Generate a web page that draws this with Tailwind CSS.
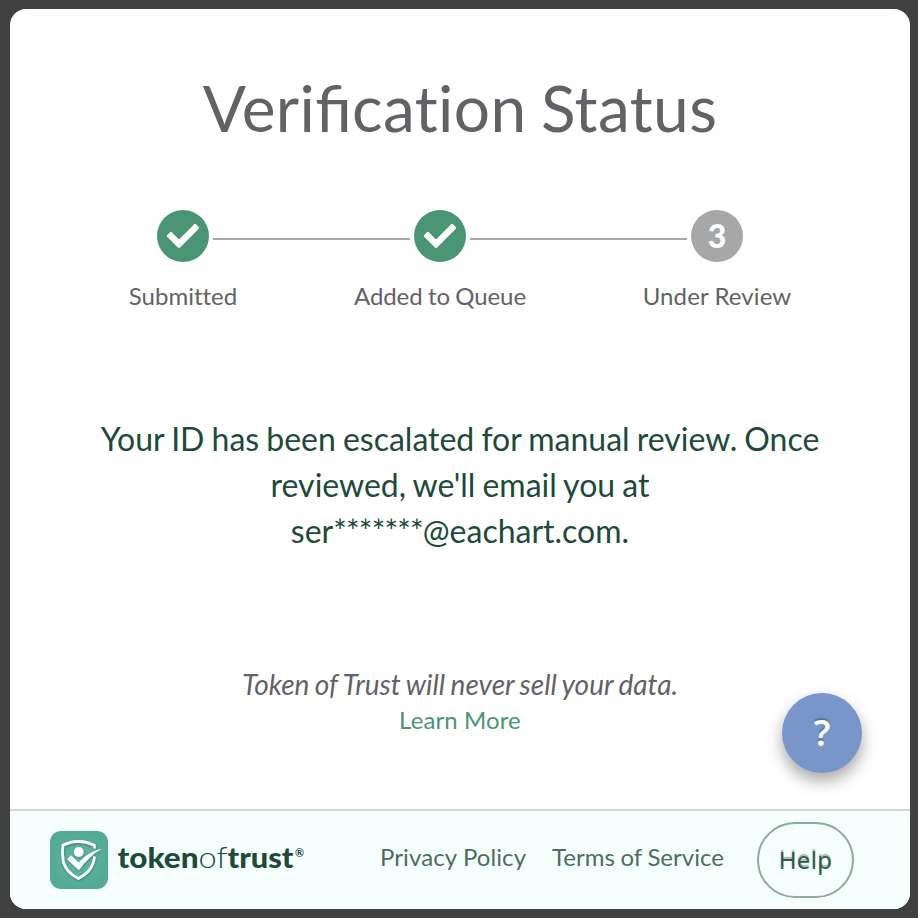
<!DOCTYPE html>
<html lang="en">
<head>
<meta charset="utf-8">
<title>Verification Status</title>
<script src="https://cdn.jsdelivr.net/npm/@tailwindcss/browser@4"></script>
</head>
<body class="h-[918px] overflow-hidden bg-[#404040] pt-[9px] pl-[10px] font-['Lato',sans-serif] text-[#626266] [font-variant-ligatures:none]">
<div class="relative flex h-[900px] w-[900px] flex-col overflow-hidden rounded-2xl bg-white">
  <main class="flex h-[800px] flex-col items-center text-center">
    <h1 class="mt-[60px] text-[64px] leading-[77px] whitespace-nowrap"><span class="tracking-[0.4px]">Veri</span><span class="[font-variant-ligatures:normal]">fi</span><span class="tracking-[0.4px] [word-spacing:-2.5px]">cation Status</span></h1>

    <div class="mt-[64px] mr-5 flex h-[100px] items-start text-2xl">
      <div class="flex w-[52px] flex-col items-center">
        <div class="flex size-[52px] shrink-0 items-center justify-center rounded-full bg-[#4a9573]">
          <svg class="size-8" viewBox="0 0 512 512" fill="#fff"><path d="M173.898 439.404l-166.4-166.4c-9.997-9.997-9.997-26.206 0-36.204l36.203-36.204c9.997-9.998 26.207-9.998 36.204 0L192 312.69 432.095 72.596c9.997-9.997 26.207-9.997 36.204 0l36.203 36.204c9.997 9.997 9.997 26.206 0 36.204l-294.4 294.401c-9.998 9.997-26.207 9.997-36.204-.001z"/></svg>
        </div>
        <span class="mt-[19px] leading-[30px] whitespace-nowrap">Submitted</span>
      </div>
      <div class="mx-1 mt-7 h-0.5 w-[197px] bg-[#a7a7a7]"></div>
      <div class="flex w-[52px] flex-col items-center">
        <div class="flex size-[52px] shrink-0 items-center justify-center rounded-full bg-[#4a9573]">
          <svg class="size-8" viewBox="0 0 512 512" fill="#fff"><path d="M173.898 439.404l-166.4-166.4c-9.997-9.997-9.997-26.206 0-36.204l36.203-36.204c9.997-9.998 26.207-9.998 36.204 0L192 312.69 432.095 72.596c9.997-9.997 26.207-9.997 36.204 0l36.203 36.204c9.997 9.997 9.997 26.206 0 36.204l-294.4 294.401c-9.998 9.997-26.207 9.997-36.204-.001z"/></svg>
        </div>
        <span class="mt-[19px] leading-[30px] whitespace-nowrap tracking-[-0.1px] [word-spacing:-0.6px]">Added to Queue</span>
      </div>
      <div class="mx-1 mt-7 h-0.5 w-[217px] bg-[#a7a7a7]"></div>
      <div class="flex w-[52px] flex-col items-center">
        <div class="flex size-[52px] shrink-0 items-center justify-center rounded-full bg-[#a7a7a7] text-[32px] font-black text-white">3</div>
        <span class="mt-[19px] leading-[30px] tracking-[0.1px] whitespace-nowrap">Under Review</span>
      </div>
    </div>

    <p class="mt-[106px] text-[32px] leading-[46px] whitespace-nowrap text-[#1d4a3a] [word-spacing:-1.1px]">Your ID has been escalated for manual review. Once<br>reviewed, we'll email you at<br>ser<span class="tracking-[-0.8px]">*******</span>@eachart.com.</p>

    <p class="mt-[112px] text-[28px] leading-9 whitespace-nowrap italic [word-spacing:-1.1px]">Token of Trust will never sell your data.</p>
    <a class="text-2xl leading-[35px] tracking-[0.1px] whitespace-nowrap text-[#4a9573]">Learn More</a>
  </main>

  <footer class="flex h-[100px] items-start border-t-2 border-[#d3d8d6] bg-[#f5fffc] pl-10 text-2xl text-[#4d6c61]">
    <svg class="mt-5 size-[58px] shrink-0" viewBox="0 0 58 58">
      <defs>
        <radialGradient id="tile"><stop offset="0" stop-color="#62b9aa"/><stop offset="1" stop-color="#52ab92"/></radialGradient>
        <filter id="soft" x="-20%" y="-20%" width="140%" height="140%"><feDropShadow dx="0.4" dy="0.9" stdDeviation="0.8" flood-color="#1d5c49" flood-opacity=".65"/></filter>
      </defs>
      <rect width="58" height="58" rx="11" fill="url(#tile)"/>
      <g filter="url(#soft)">
        <path d="M44.6 17.5L44.3 14.2Q36.5 10.4 28.5 10.3Q20.5 10.4 12.9 14.2Q11.8 23 13.3 30.4Q15.8 41.2 28.5 47.5Q41 41 43.8 29.8L44.5 25.5" fill="none" stroke="#fff" stroke-width="2.7" stroke-linejoin="round"/>
        <circle cx="28.7" cy="21" r="4.9" fill="#fff"/>
        <path d="M17.2 28.5L21 24.2L28.7 31.5Q38.5 20.4 51.8 17.8Q39.8 24.4 28.8 39.2Z" fill="#fff"/>
      </g>
    </svg>
    <svg class="mt-5 ml-2 h-[58px] w-[194px] shrink-0 overflow-visible" viewBox="0 0 194 58" fill="#1d4a3a" font-family="Lato, sans-serif" font-size="29">
      <text x="1.5" y="37" font-weight="900" textLength="81" lengthAdjust="spacingAndGlyphs">token</text>
      <text x="82.5" y="37" font-weight="300" textLength="29" lengthAdjust="spacingAndGlyphs">of</text>
      <text x="111.5" y="37" font-weight="900" textLength="66" lengthAdjust="spacingAndGlyphs">trust</text>
      <text x="179" y="26" font-size="12" font-weight="700" textLength="9" lengthAdjust="spacingAndGlyphs">®</text>
    </svg>
    <a class="mt-[28px] ml-[70px] w-[147px] leading-9 tracking-[0.1px] whitespace-nowrap">Privacy Policy</a>
    <a class="mt-[28px] ml-[25px] w-[173px] leading-9 whitespace-nowrap [word-spacing:-0.5px]">Terms of Service</a>
    <button class="mt-[11px] ml-[32px] h-[76px] w-[97px] shrink-0 rounded-[38px] border-2 border-[#8eaaa0] font-['Noto_Sans',sans-serif] text-2xl tracking-[0.3px] text-[#2b5c4a] [text-shadow:0_-2px_1px_rgb(0_0_0/0.3)]">Help</button>
  </footer>

  <button class="absolute top-[684px] left-[772px] size-20 rounded-full bg-[#7896ca] font-['Noto_Sans',sans-serif] text-[36px] font-semibold text-white shadow-[0_8px_16px_rgb(0_0_0/0.35)] [text-shadow:0_-2px_1px_rgb(0_0_0/0.25)]">?</button>
</div>
</body>
</html>
